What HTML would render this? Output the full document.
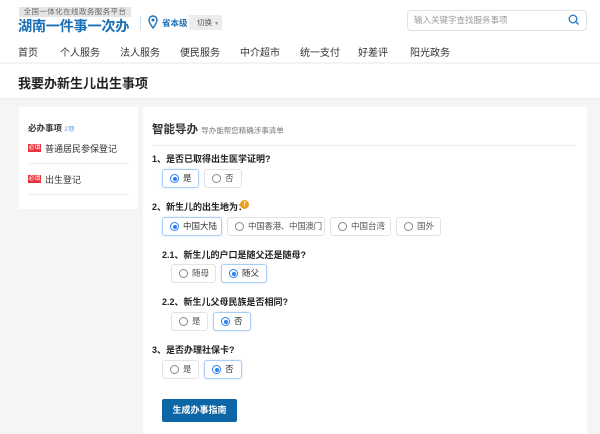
<!DOCTYPE html>
<html><head><meta charset="utf-8"><style>
*{margin:0;padding:0;box-sizing:border-box}
body{width:600px;height:434px;overflow:hidden;background:#f5f5f5;font-family:"Liberation Sans","Noto Sans CJK SC",sans-serif;color:#333;position:relative}
.a{position:absolute;white-space:nowrap}
.hdr{position:absolute;left:0;top:0;width:600px;height:62px;background:#fff}
.tb{position:absolute;left:0;top:64px;width:600px;height:34px;background:#fff;box-shadow:0 1px 3px rgba(0,0,0,.06)}
.card{position:absolute;background:#fff}
.opt{position:absolute;height:19px;border:1px solid #e3e3e3;border-radius:3px;font-size:8.5px;color:#555;line-height:17px;padding-left:20px;white-space:nowrap;overflow:hidden}
.opt.on{border-color:#a9cdf5;color:#333;box-shadow:0 0 2px rgba(80,150,240,.25)}
.opt i{position:absolute;left:7px;top:4px;width:9px;height:9px;border:1px solid #888;border-radius:50%}
.opt.on i{border-color:#2a7ff0}
.opt.on i:after{content:"";position:absolute;left:1.5px;top:1.5px;width:4px;height:4px;border-radius:50%;background:#2a7ff0}
.q{position:absolute;font-size:9px;font-weight:bold;color:#222;white-space:nowrap}
.nav{position:absolute;top:44px;font-size:10px;color:#333}
</style></head><body>
<div class="hdr"></div>
<div class="a" style="left:19px;top:7px;height:10px;width:112px;background:#e5e5e5;font-size:7.5px;line-height:10px;color:#666;text-align:center;letter-spacing:0.4px">全国一体化在线政务服务平台</div>
<div class="a" style="left:18px;top:16px;font-size:14.2px;font-weight:bold;color:#1a6fb5;letter-spacing:-0.3px">湖南一件事一次办</div>
<div class="a" style="left:140px;top:16px;width:1px;height:14px;background:#cfe0ee"></div>
<svg class="a" style="left:148px;top:15px" width="10" height="14" viewBox="0 0 10 14"><path d="M5 13C2 9 1 7 1 5a4 4 0 0 1 8 0c0 2-1 4-4 8z" fill="none" stroke="#1a6fb5" stroke-width="1.4"/><circle cx="5" cy="5" r="1.5" fill="#1a6fb5"/></svg>
<div class="a" style="left:162px;top:17px;font-size:8.5px;font-weight:bold;color:#1a6fb5">省本级</div>
<div class="a" style="left:189px;top:15px;width:33px;height:15px;background:#ececec;font-size:7.5px;line-height:15px;color:#555;padding-left:8px">切换 <span style="font-size:5px;color:#888">▼</span></div>
<div class="a" style="left:407px;top:10px;width:180px;height:21px;border:1px solid #e2e2e2;border-radius:4px;font-size:8.5px;line-height:19px;color:#999;padding-left:6px">输入关键字查找服务事项</div>
<svg class="a" style="left:568px;top:14px" width="12" height="12" viewBox="0 0 12 12"><circle cx="5" cy="5" r="3.8" fill="none" stroke="#2a7fc9" stroke-width="1.4"/><path d="M8 8l2.5 2.5" stroke="#2a7fc9" stroke-width="1.5"/></svg>
<div class="nav" style="left:18px">首页</div>
<div class="nav" style="left:60px">个人服务</div>
<div class="nav" style="left:120px">法人服务</div>
<div class="nav" style="left:180px">便民服务</div>
<div class="nav" style="left:240px">中介超市</div>
<div class="nav" style="left:300px">统一支付</div>
<div class="nav" style="left:358px">好差评</div>
<div class="nav" style="left:410px">阳光政务</div>
<div class="tb"></div>
<div class="a" style="left:18px;top:73px;font-size:13px;font-weight:bold;color:#222">我要办新生儿出生事项</div>

<div class="card" style="left:19px;top:107px;width:119px;height:102px"></div>
<div class="a" style="left:28px;top:122px;font-size:8.5px;font-weight:bold;color:#333">必办事项 <span style="font-size:6.5px;color:#5aa0e6;font-weight:normal">2项</span></div>
<div class="a" style="left:28px;top:144px;width:13px;height:8px;background:#e8323c;color:#fff;font-size:6px;line-height:8px;text-align:center">必填</div>
<div class="a" style="left:45px;top:142px;font-size:9px;color:#333">普通居民参保登记</div>
<div class="a" style="left:28px;top:163px;width:101px;height:1px;background:#eee"></div>
<div class="a" style="left:28px;top:175px;width:13px;height:8px;background:#e8323c;color:#fff;font-size:6px;line-height:8px;text-align:center">必填</div>
<div class="a" style="left:45px;top:173px;font-size:9px;color:#333">出生登记</div>
<div class="a" style="left:28px;top:194px;width:101px;height:1px;background:#eee"></div>

<div class="card" style="left:143px;top:107px;width:444px;height:327px"></div>
<div class="a" style="left:152px;top:121px;font-size:11.5px;font-weight:bold;color:#333">智能导办 <span style="font-size:7.5px;color:#777;font-weight:normal">导办能帮您精确涉事清单</span></div>
<div class="a" style="left:152px;top:145px;width:424px;height:1px;background:#eee"></div>

<div class="q" style="left:152px;top:152px">1、是否已取得出生医学证明?</div>
<div class="opt on" style="left:162px;top:169px;width:37px"><i></i>是</div>
<div class="opt" style="left:204px;top:169px;width:38px"><i></i>否</div>

<div class="q" style="left:152px;top:200px">2、新生儿的出生地为：</div>
<div class="a" style="left:240px;top:200px;width:9px;height:9px;border-radius:50%;background:#f0a020;color:#fff;font-size:7px;line-height:9px;text-align:center;font-weight:bold;font-style:italic">!</div>
<div class="opt on" style="left:162px;top:217px;width:60px"><i></i>中国大陆</div>
<div class="opt" style="left:227px;top:217px;width:98px;letter-spacing:-0.3px"><i></i>中国香港、中国澳门</div>
<div class="opt" style="left:330px;top:217px;width:61px"><i></i>中国台湾</div>
<div class="opt" style="left:396px;top:217px;width:45px"><i></i>国外</div>

<div class="q" style="left:162px;top:248px">2.1、新生儿的户口是随父还是随母?</div>
<div class="opt" style="left:171px;top:264px;width:45px"><i></i>随母</div>
<div class="opt on" style="left:221px;top:264px;width:46px"><i></i>随父</div>

<div class="q" style="left:162px;top:295px">2.2、新生儿父母民族是否相同?</div>
<div class="opt" style="left:171px;top:312px;width:37px"><i></i>是</div>
<div class="opt on" style="left:213px;top:312px;width:38px"><i></i>否</div>

<div class="q" style="left:152px;top:343px">3、是否办理社保卡?</div>
<div class="opt" style="left:162px;top:360px;width:37px"><i></i>是</div>
<div class="opt on" style="left:204px;top:360px;width:38px"><i></i>否</div>

<div class="a" style="left:162px;top:399px;width:75px;height:23px;background:#0d66a6;border-radius:2px;color:#fff;font-size:9px;font-weight:bold;line-height:23px;text-align:center">生成办事指南</div>
</body></html>
